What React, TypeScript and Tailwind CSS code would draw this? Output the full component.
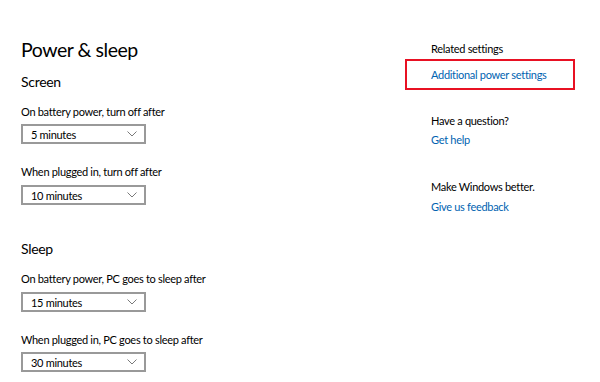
import React from "react";

function Dropdown({ value }: { value: string }) {
  return (
    <div className="flex h-[20px] w-[125px] items-center justify-between border-2 border-[#999999] bg-white pl-[8px] pr-[7px]">
      <span className="text-[11px] leading-none text-black">{value}</span>
      <svg width="10" height="6" viewBox="0 0 10 6" fill="none">
        <path d="M0.5 0.5 L5 5 L9.5 0.5" stroke="#7a7a7a" strokeWidth="1" />
      </svg>
    </div>
  );
}

export default function App() {
  return (
    <div
      className="flex h-[382px] w-[600px] overflow-hidden bg-white tracking-[-0.3px] text-black"
      style={{ fontFamily: 'Lato, "Open Sans", sans-serif' }}
    >
      <div className="w-[405px] pl-[21px] pt-[36px]">
        <h1 className="text-[19.5px] leading-[28px] font-normal tracking-[-0.45px]">Power &amp; sleep</h1>
        <h2 className="mt-[8px] text-[14px] leading-[20px]">Screen</h2>

        <p className="mt-[12px] text-[11px] leading-[16px]">On battery power, turn off after</p>
        <div className="mt-[4px]">
          <Dropdown value="5 minutes" />
        </div>

        <p className="mt-[20px] text-[11px] leading-[16px]">When plugged in, turn off after</p>
        <div className="mt-[5px]">
          <Dropdown value="10 minutes" />
        </div>

        <h2 className="mt-[34px] text-[14px] leading-[20px]">Sleep</h2>

        <p className="mt-[12px] text-[11px] leading-[16px]">On battery power, PC goes to sleep after</p>
        <div className="mt-[5px]">
          <Dropdown value="15 minutes" />
        </div>

        <p className="mt-[20px] text-[11px] leading-[16px]">When plugged in, PC goes to sleep after</p>
        <div className="mt-[4px]">
          <Dropdown value="30 minutes" />
        </div>
      </div>

      <div className="pt-[41px] text-[11px] leading-[16px]">
        <p className="pl-[26px]">Related settings</p>
        <div className="mt-[2px] flex h-[31px] w-[170px] items-center border-2 border-[#e81123] pl-[24px]">
          <a href="#" className="whitespace-nowrap text-[#0063b1]">Additional power settings</a>
        </div>

        <p className="mt-[23px] pl-[26px]">Have a question?</p>
        <a href="#" className="mt-[3px] block pl-[26px] text-[#0063b1]">Get help</a>

        <p className="mt-[31px] pl-[26px]">Make Windows better.</p>
        <a href="#" className="mt-[4px] block pl-[26px] text-[#0063b1]">Give us feedback</a>
      </div>
    </div>
  );
}
